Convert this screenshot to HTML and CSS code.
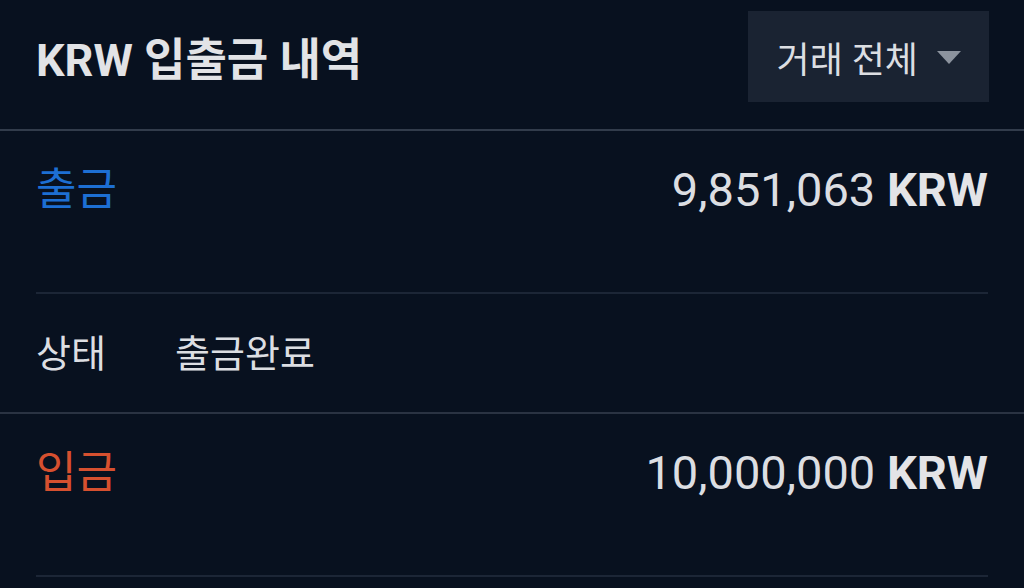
FILE: index.html
```html
<!DOCTYPE html>
<html lang="ko">
<head>
    <meta charset="UTF-8">
    <title>KRW 입출금 내역</title>
    <link rel="stylesheet" href="styles.css">
</head>
<body>
    <header class="top">
        <h1 class="title">KRW 입출금 내역</h1>
        <div class="filter">
            <span>거래 전체</span>
            <svg class="caret" width="24" height="13" viewBox="0 0 24 13"><path d="M0 0 H24 L12 13 Z" fill="#8c939e"/></svg>
        </div>
    </header>

    <section class="item">
        <div class="summary">
            <span class="kind out">출금</span>
            <span class="amount">9,851,063 <b>KRW</b></span>
        </div>
        <div class="detail">
            <span class="label">상태</span>
            <span class="value">출금완료</span>
        </div>
    </section>

    <section class="item last">
        <div class="summary">
            <span class="kind in">입금</span>
            <span class="amount">10,000,000 <b>KRW</b></span>
        </div>
    </section>
</body>
</html>
```

FILE: styles.css
```css
body {
    margin: 0;
    background: #08111f;
    color: #dcdee2;
    font-family: Roboto, "Noto Sans CJK KR", sans-serif;
}
.top {
    display: flex;
    justify-content: space-between;
    align-items: center;
    height: 91px;
    padding: 11px 35px 27px 36px;
    border-bottom: 2px solid #323c4b;
}
.title {
    margin: 0;
    font-size: 45px;
    font-weight: 700;
    color: #e2e3e6;
}
.filter {
    display: flex;
    align-items: center;
    gap: 19px;
    height: 91px;
    padding: 0 28px 0 29px;
    background: #1a2332;
    font-size: 36px;
    color: #dcdee2;
}
.caret {
    margin-top: 2px;
}
.item {
    border-bottom: 2px solid #2a3342;
}
.item.last {
    border-bottom: none;
}
.summary {
    display: flex;
    justify-content: space-between;
    align-items: flex-start;
    height: 127px;
    margin: 0 36px;
    padding-top: 34px;
    border-bottom: 2px solid #1c2636;
}
.kind {
    font-size: 44px;
    line-height: 50px;
}
.out {
    color: #1d6fd3;
}
.in {
    color: #d6502f;
}
.amount {
    font-size: 47px;
    line-height: 50px;
    color: #dcdee2;
}
.amount b {
    font-weight: 700;
    color: #e3e4e7;
}
.detail {
    display: flex;
    align-items: center;
    height: 112px;
    padding: 0 36px 6px 36px;
    font-size: 38px;
}
.label {
    width: 139px;
}
```
